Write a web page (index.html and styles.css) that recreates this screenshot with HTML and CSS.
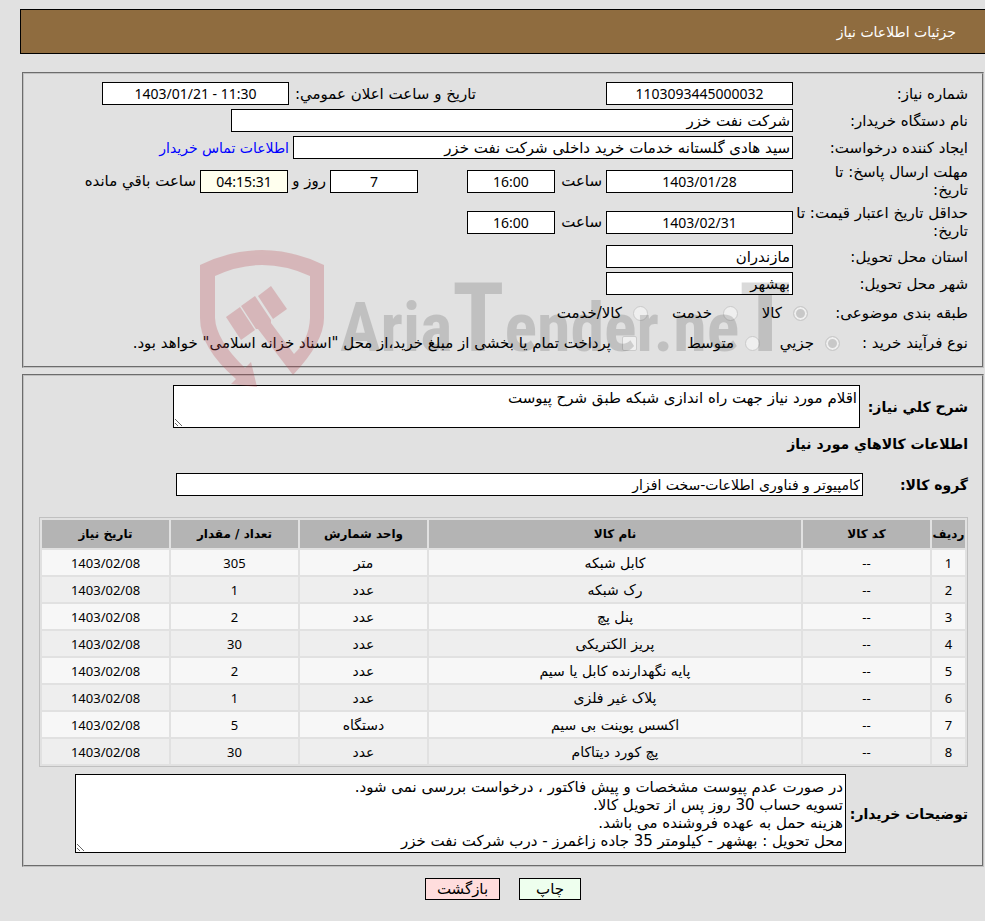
FILE: index.html
```html
<!DOCTYPE html>
<html lang="fa" dir="rtl">
<head>
<meta charset="utf-8">
<title>جزئیات اطلاعات نیاز</title>
<link rel="stylesheet" href="styles.css">
</head>
<body>
<header class="title-bar"><h1>جزئیات اطلاعات نیاز</h1></header>
<main>
<section class="panel panel-info">
  <div class="row">
    <label class="caption" for="need-no">شماره نیاز:</label>
    <input class="field w-main num" id="need-no" value="1103093445000032" readonly>
    <label class="announce" for="announce">تاریخ و ساعت اعلان عمومي:</label>
    <input class="field w-main num" id="announce" value="1403/01/21 - 11:30" dir="ltr" readonly>
  </div>
  <div class="row">
    <label class="caption" for="buyer">نام دستگاه خریدار:</label>
    <input class="field w-buyer" id="buyer" value="شرکت نفت خزر" readonly>
  </div>
  <div class="row">
    <label class="caption" for="creator">ایجاد کننده درخواست:</label>
    <input class="field w-creator" id="creator" value="سید هادی گلستانه خدمات خرید داخلی شرکت نفت خزر" readonly>
    <a class="contact" href="#contact">اطلاعات تماس خریدار</a>
  </div>
  <div class="row tall">
    <label class="caption" for="deadline">مهلت ارسال پاسخ: تا<br>تاریخ:</label>
    <input class="field w-main num" id="deadline" value="1403/01/28" readonly>
    <label class="unit" for="deadline-time">ساعت</label>
    <input class="field w-time num" id="deadline-time" value="16:00" readonly>
    <input class="field w-time num days" id="days" value="7" readonly>
    <label class="and" for="days">روز و</label>
    <input class="field w-time num countdown" id="remain" value="04:15:31" readonly>
    <label class="remain" for="remain">ساعت باقي مانده</label>
  </div>
  <div class="row tall">
    <label class="caption" for="valid">حداقل تاریخ اعتبار قیمت: تا<br>تاریخ:</label>
    <input class="field w-main num" id="valid" value="1403/02/31" readonly>
    <label class="unit" for="valid-time">ساعت</label>
    <input class="field w-time num" id="valid-time" value="16:00" readonly>
  </div>
  <div class="row">
    <label class="caption" for="province">استان محل تحویل:</label>
    <input class="field w-main" id="province" value="مازندران" readonly>
  </div>
  <div class="row">
    <label class="caption" for="city">شهر محل تحویل:</label>
    <input class="field w-main" id="city" value="بهشهر" readonly>
  </div>
  <div class="row choices subject">
    <span class="caption">طبقه بندی موضوعی:</span>
    <label class="choice"><input type="radio" name="subject" checked disabled>کالا</label>
    <label class="choice"><input type="radio" name="subject" disabled>خدمت</label>
    <label class="choice"><input type="radio" name="subject" disabled>کالا/خدمت</label>
  </div>
  <div class="row choices process">
    <span class="caption">نوع فرآیند خرید :</span>
    <label class="choice"><input type="radio" name="process" checked disabled>جزیي</label>
    <label class="choice"><input type="radio" name="process" disabled>متوسط</label>
    <label class="choice treasury"><input type="checkbox" disabled>پرداخت تمام یا بخشی از مبلغ خرید،از محل "اسناد خزانه اسلامی" خواهد بود.</label>
  </div>
  <svg class="watermark" viewBox="0 0 600 140" direction="ltr" aria-hidden="true">
    <g class="mark-red">
      <path d="M0 15Q62-15 124 15V68Q124 92 93 125L58 79H56L41 56L55 46L71 70V73L94 104Q109 90 110 68V26Q62 4 15 26V68Q16 90 45 118L51 112L57 137L31 134L36 129Q0 98 0 68Z"/>
      <path d="M26 67L40 57L55 80L41 90Z"/>
      <path d="M58 46L71 36L87 59L73 69Z"/>
    </g>
    <text class="mark-gray" x="140" y="101">Aria<tspan class="big">T</tspan>ender.ne<tspan class="big">T</tspan></text>
  </svg>
</section>
<section class="panel panel-goods">
  <div class="row bold summary">
    <label for="summary">شرح کلي نیاز:</label>
    <textarea class="field area" id="summary" readonly>اقلام مورد نیاز جهت راه اندازی شبکه طبق شرح پیوست</textarea>
  </div>
  <h2>اطلاعات کالاهاي مورد نیاز</h2>
  <div class="row bold group">
    <label for="group">گروه کالا:</label>
    <input class="field" id="group" value="کامپیوتر و فناوری اطلاعات-سخت افزار" readonly>
  </div>
  <table>
    <colgroup><col class="c-row"><col class="c-mid"><col><col class="c-mid"><col class="c-mid"><col class="c-mid"></colgroup>
    <thead><tr><th>ردیف</th><th>کد کالا</th><th>نام کالا</th><th>واحد شمارش</th><th>تعداد / مقدار</th><th>تاریخ نیاز</th></tr></thead>
    <tbody>
      <tr><td>1</td><td>--</td><td class="word">کابل شبکه</td><td class="word">متر</td><td>305</td><td>1403/02/08</td></tr>
      <tr><td>2</td><td>--</td><td class="word">رک شبکه</td><td class="word">عدد</td><td>1</td><td>1403/02/08</td></tr>
      <tr><td>3</td><td>--</td><td class="word">پنل پچ</td><td class="word">عدد</td><td>2</td><td>1403/02/08</td></tr>
      <tr><td>4</td><td>--</td><td class="word">پریز الکتریکی</td><td class="word">عدد</td><td>30</td><td>1403/02/08</td></tr>
      <tr><td>5</td><td>--</td><td class="word">پایه نگهدارنده کابل یا سیم</td><td class="word">عدد</td><td>2</td><td>1403/02/08</td></tr>
      <tr><td>6</td><td>--</td><td class="word">پلاک غیر فلزی</td><td class="word">عدد</td><td>1</td><td>1403/02/08</td></tr>
      <tr><td>7</td><td>--</td><td class="word">اکسس پوینت بی سیم</td><td class="word">دستگاه</td><td>5</td><td>1403/02/08</td></tr>
      <tr><td>8</td><td>--</td><td class="word">پچ کورد دیتاکام</td><td class="word">عدد</td><td>30</td><td>1403/02/08</td></tr>
    </tbody>
  </table>
  <div class="row bold notes">
    <label for="notes">توضیحات خریدار:</label>
    <textarea class="field area" id="notes" readonly>در صورت عدم پیوست مشخصات و پیش فاکتور ، درخواست بررسی نمی شود.
تسویه حساب 30 روز پس از تحویل کالا.
هزینه حمل به عهده فروشنده می باشد.
محل تحویل : بهشهر - کیلومتر 35 جاده زاغمرز - درب شرکت نفت خزر</textarea>
  </div>
</section>
</main>
<footer class="actions">
  <button class="btn print" type="button">چاپ</button>
  <button class="btn back" type="button">بازگشت</button>
</footer>
</body>
</html>
```

FILE: styles.css
```css
* { box-sizing: border-box; }
body {
  margin: 0;
  padding-top: 9px;
  background: #e1e1e1;
  color: #000;
  font: 15px/18px "DejaVu Sans", sans-serif;
}
.title-bar {
  margin-left: 20px;
  height: 45px;
  display: flex;
  align-items: center;
  padding-right: 29px;
  border: 1px solid #000;
  border-right: 0;
  background: #8f6c3f;
  color: #fff;
}
h1 { margin: 0; font-size: 14px; font-weight: normal; }
main { margin: 18px 1px 0 22px; }
.panel {
  position: relative;
  border: 2px groove #c0c0c0;
  padding: 8px 14px 6px;
}
.panel-goods { margin-top: 6px; padding: 9px 14px 12px 15px; }
.row {
  display: flex;
  align-items: center;
  min-height: 23px;
  margin-bottom: 4px;
  white-space: nowrap;
}
.row.tall { min-height: 36px; margin: 4px 0 5px; }
.caption { flex: 0 0 175px; }
.field {
  height: 23px;
  margin: 0;
  padding: 0 2px;
  border: 1px solid #000;
  border-radius: 0;
  background: #fff;
  color: #000;
  font: 15px/18px "DejaVu Sans", sans-serif;
  min-width: 0;
}
.num { text-align: center; font: 14px/18px "Noto Sans", "DejaVu Sans", sans-serif; }
.w-main { width: 187px; }
.w-buyer { width: 562px; }
.w-creator { width: 500px; }
.w-time { width: 88px; }
.announce { width: 187px; margin-right: 130px; }
.contact { margin-right: 4px; color: #00f; font-size: 14px; text-decoration: none; }
.unit { width: 51px; padding-right: 4px; }
.days { margin-right: 49px; }
.and { width: 42px; padding-right: 4px; }
.field.countdown { background: #ffffee; }
.remain { padding-right: 4px; }
.choice { display: flex; align-items: center; gap: 11px; }
.row.choices { min-height: 26px; }
.choice input {
  appearance: none;
  flex: none;
  width: 15px;
  height: 15px;
  margin: 0;
  border: 1px solid #cacaca;
  border-radius: 50%;
  background: #efefef;
}
.choice input[type="checkbox"] { border-radius: 2px; }
.choice input:checked { background: #c8c8c8; box-shadow: inset 0 0 0 2px #efefef; }
.subject { margin-top: 5px; }
.subject .caption { flex-basis: 160px; }
.subject .choice { width: 70px; }
.process .caption { flex-basis: 128px; }
.process .choice { width: 80px; }
.subject .choice + .choice { width: 90px; }
.process .choice + .choice { width: 123px; }
.watermark {
  position: absolute;
  left: 176px;
  top: 176px;
  width: 600px;
  height: 140px;
  z-index: 1;
  overflow: visible;
  pointer-events: none;
}
.mark-red { fill: #b8404a; opacity: .26; }
.mark-gray { fill: #000; opacity: .14; font: bold 68px "Roboto Condensed", Roboto, sans-serif; }
.mark-gray .big { font-size: 96px; }
.bold, h2 { font-size: 14px; font-weight: bold; }
.area { padding: 3px 2px; resize: both; overflow: hidden; }
.summary { gap: 4px; margin: 0; }
.summary label { flex: 0 0 104px; }
.summary .area { width: 687px; height: 43px; }
h2 { margin: 7px 0 20px; line-height: 18px; }
.group label { flex: 0 0 105px; }
.group .field { width: 687px; font-size: 14px; }
.row.group { margin: 0 0 21px; }
table {
  width: 100%;
  table-layout: fixed;
  border: 1px solid #c0c0c0;
  border-spacing: 2px;
  text-align: center;
}
.c-row { width: 33px; }
.c-mid { width: 127px; }
th { height: 28px; padding: 0; background: #b4b4b4; font-size: 12px; white-space: nowrap; }
td { height: 25px; padding: 0; background: #eee; font: 13px/18px "Noto Sans", "DejaVu Sans", sans-serif; }
td.word { font: 14px/18px "DejaVu Sans", sans-serif; }
tbody tr:nth-child(odd) td { background: #f7f7f7; }
.row.notes { margin: 7px 0 0; }
.notes label { flex: 0 0 122px; }
.notes .area { width: 771px; height: 79px; }
.actions { display: flex; justify-content: center; gap: 19px; margin-top: 11px; padding-left: 21px; }
.btn { height: 22px; padding: 0; border: 1px solid #000; color: #000; font: inherit; }
.print { width: 62px; background: #eeffee; }
.back { width: 75px; background: #ffdddd; }
```
